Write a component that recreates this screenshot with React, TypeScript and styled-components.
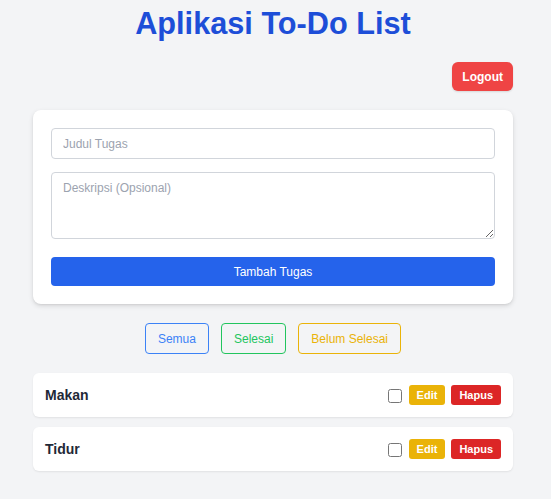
import React from "react";
import styled, { createGlobalStyle } from "styled-components";

const Global = createGlobalStyle`
  html, body { margin: 0; padding: 0; background: #f3f4f6; }
  body { font-family: "Liberation Sans", Arial, sans-serif; color: #1f2937; }
  * { box-sizing: border-box; }
`;

const Page = styled.div`
  width: 480px;
  margin-left: 33px;
  padding-top: 6px;
  padding-bottom: 24px;
`;

const Title = styled.h1`
  margin: 0;
  text-align: center;
  font-size: 30.7px;
  line-height: 36px;
  font-weight: 700;
  color: #1d4ed8;
`;

const TopBar = styled.div`
  display: flex;
  justify-content: flex-end;
  margin-top: 20px;
`;

const SolidButton = styled.button<{ $bg: string }>`
  background: ${(p) => p.$bg};
  color: #fff;
  border: none;
  border-radius: 6px;
  font-family: inherit;
  font-size: 12px;
  font-weight: 700;
  cursor: pointer;
`;

const LogoutButton = styled(SolidButton)`
  height: 29px;
  padding: 0 10px;
  box-shadow: 0 1px 2px rgba(0, 0, 0, 0.12);
`;

const Card = styled.div`
  margin-top: 19px;
  background: #fff;
  border-radius: 8px;
  box-shadow: 0 2px 5px rgba(0, 0, 0, 0.12), 0 1px 2px rgba(0, 0, 0, 0.06);
  padding: 18px;
  display: flex;
  flex-direction: column;
`;

const fieldBase = `
  width: 100%;
  border: 1px solid #d1d5db;
  border-radius: 4px;
  font-family: "Liberation Sans", Arial, sans-serif;
  font-size: 12px;
  color: #1f2937;
  background: #fff;
  padding: 0 11px;
  &::placeholder { color: #9ca3af; }
  &:focus { outline: none; }
`;

const Input = styled.input`
  ${fieldBase}
  height: 31px;
`;

const TextArea = styled.textarea`
  ${fieldBase}
  margin-top: 13px;
  height: 67px;
  padding-top: 8px;
  resize: vertical;
  display: block;
`;

const SubmitButton = styled.button`
  margin-top: 18px;
  height: 29px;
  width: 100%;
  border: none;
  border-radius: 4px;
  background: #2563eb;
  color: #fff;
  font-family: inherit;
  font-size: 12px;
  cursor: pointer;
`;

const Filters = styled.div`
  margin-top: 19px;
  display: flex;
  justify-content: center;
  gap: 12px;
`;

const FilterButton = styled.button<{ $c: string }>`
  height: 31px;
  padding: 0 12px;
  background: transparent;
  border: 1px solid ${(p) => p.$c};
  color: ${(p) => p.$c};
  border-radius: 4px;
  font-family: inherit;
  font-size: 12px;
  cursor: pointer;
`;

const List = styled.div`
  margin-top: 19px;
  display: flex;
  flex-direction: column;
  gap: 10px;
`;

const Row = styled.div`
  height: 44px;
  background: #fff;
  border-radius: 6px;
  box-shadow: 0 1px 2px rgba(0, 0, 0, 0.08);
  display: flex;
  align-items: center;
  padding: 0 12px;
`;

const RowTitle = styled.span`
  flex: 1;
  font-size: 14px;
  font-weight: 700;
  color: #1f2937;
`;

const Actions = styled.div`
  display: flex;
  align-items: center;
  gap: 6px;
`;

const Check = styled.input`
  width: 14px;
  height: 14px;
  margin: 1px 1px 0 0;
`;

const SmallButton = styled(SolidButton)`
  height: 20px;
  padding: 0 8px;
  border-radius: 3px;
  font-size: 11px;
`;

const todos = ["Makan", "Tidur"];

export default function App() {
  return (
    <>
      <Global />
      <Page>
        <Title>Aplikasi To-Do List</Title>
        <TopBar>
          <LogoutButton $bg="#ef4444">Logout</LogoutButton>
        </TopBar>
        <Card>
          <Input placeholder="Judul Tugas" />
          <TextArea placeholder="Deskripsi (Opsional)" />
          <SubmitButton>Tambah Tugas</SubmitButton>
        </Card>
        <Filters>
          <FilterButton $c="#3b82f6">Semua</FilterButton>
          <FilterButton $c="#22c55e">Selesai</FilterButton>
          <FilterButton $c="#eab308">Belum Selesai</FilterButton>
        </Filters>
        <List>
          {todos.map((t) => (
            <Row key={t}>
              <RowTitle>{t}</RowTitle>
              <Actions>
                <Check type="checkbox" />
                <SmallButton $bg="#eab308">Edit</SmallButton>
                <SmallButton $bg="#dc2626">Hapus</SmallButton>
              </Actions>
            </Row>
          ))}
        </List>
      </Page>
    </>
  );
}
